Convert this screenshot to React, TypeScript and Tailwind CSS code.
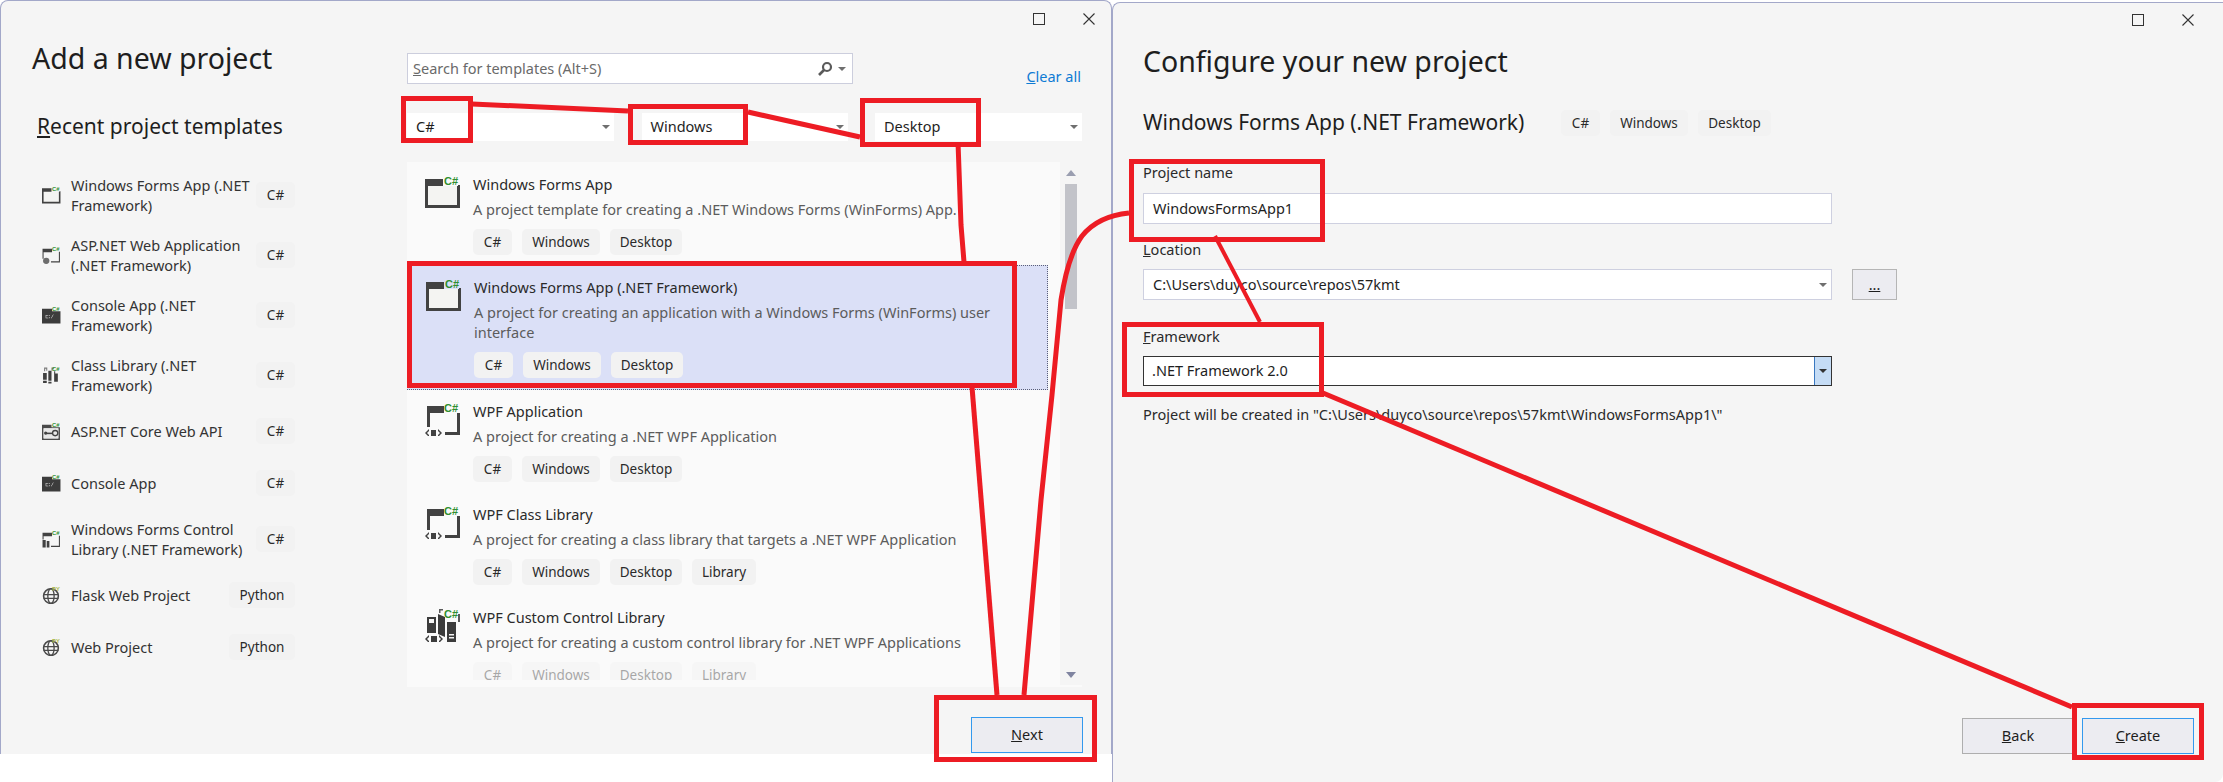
import type { ReactNode } from 'react';

const FONT = '[font-family:"Noto_Sans","Open_Sans",sans-serif]';

type Kind = 'forms' | 'asp' | 'console' | 'library' | 'api' | 'control' | 'web' | 'wpf' | 'custom';

function Mark({ label = 'C#', color = '#2f8f2f' }: { label?: string; color?: string }) {
  return (
    <text x="19" y="9.5" fontSize="11" fontWeight="700" fill={color} fontFamily="Liberation Sans, sans-serif">
      {label}
    </text>
  );
}

// project type icons, all on a 36x34 canvas
function ProjectIcon({ kind, className }: { kind: Kind; className: string }) {
  return (
    <svg viewBox="0 0 36 34" className={className} aria-hidden="true">
      {kind === 'forms' && (
        <>
          <path d="M1 5h17v6h16v21H1z" fill="#f4f4f2" />
          <path d="M0 4h18v7h15v-1h2v23H0zM3 11v19h29V11z" fill="#424242" />
        </>
      )}
      {kind === 'asp' && (
        <>
          <path d="M1 5h18v7H3v12H1z" fill="#424242" />
          <path d="M32 11h2v20H17v-2h15z" fill="#424242" />
          <circle cx="8" cy="28" r="6" fill="#6d6d6d" />
        </>
      )}
      {kind === 'console' && (
        <>
          <path d="M0 5h19v5h16v23H0z" fill="#3c3c3c" />
          <path d="M7 17h5v1H8v4h4v1H7zM14 17h1v2h-1zM14 21h1v2h-1zM17 23l4-7h1l-4 7z" fill="#e8e8e8" />
        </>
      )}
      {kind === 'library' && (
        <>
          <path d="M2 13h7v13H2zM12 9h6v19h-6zM23 10h2v4h5v16h-7zM2 28h7v4H2zM12 30h6v3h-6z" fill="#3f3f3f" />
          <path d="M4 3h6v6H8V5H6v5H4zM23 3h-5v6h2V5h3z" fill="#7a7a7a" />
        </>
      )}
      {kind === 'api' && (
        <>
          <path d="M0 5h18v5h16v24H0zM3 12v19h28V12z" fill="#4a4a4a" />
          <path d="M3 12h28v19H3z" fill="#e8e8e8" />
          <path d="M5 20h14v3H5z" fill="#424242" />
          <circle cx="7" cy="21" r="3" fill="#424242" />
          <circle cx="25" cy="21" r="5" fill="none" stroke="#424242" strokeWidth="2.5" />
        </>
      )}
      {kind === 'control' && (
        <>
          <path d="M1 5h18v7H3v6H1z" fill="#424242" />
          <path d="M32 11h2v21H17v-2h15z" fill="#424242" />
          <path d="M1 19h6v14H1zM9 21h5v12H9z" fill="#424242" />
        </>
      )}
      {kind === 'web' && (
        <>
          <circle cx="17" cy="19" r="14" fill="none" stroke="#4a4a4a" strokeWidth="3" />
          <ellipse cx="17" cy="19" rx="6" ry="14" fill="none" stroke="#4a4a4a" strokeWidth="2.5" />
          <path d="M3 15h28v2.500H3zM3 22h28v2.500H3z" fill="#4a4a4a" />
        </>
      )}
      {kind === 'wpf' && (
        <>
          <path d="M2 4h17v7H5v14H2z" fill="#424242" />
          <path d="M32 11h3v22H20v-3h12z" fill="#424242" />
          <path d="M0 31l4-4v2l-2 2 2 2v2zM17 31l-4-4v2l2 2-2 2v2zM6 28h5v6H6z" fill="#424242" />
        </>
      )}
      {kind === 'custom' && (
        <>
          <path d="M2 9h9v16H2zM13 6l7 3v20l-7-3zM22 14h9v21h-9z" fill="#3c3c3c" />
          <path d="M4 11h5v4H4zM24 26h5v1.500h-5zM24 29h5v1.500h-5z" fill="#f4f4f4" />
          <path d="M14 1h4v1.500h-2.500V5H14zM33 6h2v8h-2z" fill="#5a5a5a" />
          <path d="M0 31l4-4v2l-2 2 2 2v2zM18 31l-4-4v2l2 2-2 2v2zM6 28h6v6H6z" fill="#3c3c3c" />
        </>
      )}
      {kind === 'web' ? <Mark label="PY" color="#a9b84a" /> : <Mark />}
    </svg>
  );
}

function Tag({ children, className = '' }: { children: ReactNode; className?: string }) {
  return (
    <span className={`flex h-[26px] items-center justify-center rounded-[5px] bg-[#f2f2f2] text-[13.5px] text-[#2a2a2a] ${className}`}>
      {children}
    </span>
  );
}

function TagRow({ library }: { library?: boolean }) {
  return (
    <div className="mt-[10px] flex gap-[10px]">
      <Tag className="w-[39px]">C#</Tag>
      <Tag className="w-[78px]">Windows</Tag>
      <Tag className="w-[72px]">Desktop</Tag>
      {library && <Tag className="w-[64px]">Library</Tag>}
    </div>
  );
}

function Caret({ className = '' }: { className?: string }) {
  return <span className={`h-0 w-0 border-x-[4px] border-t-[4px] border-x-transparent border-t-[#6f6f6f] ${className}`} />;
}

const RECENT: { kind: Kind; lines: string[]; lang: string }[] = [
  { kind: 'forms', lines: ['Windows Forms App (.NET', 'Framework)'], lang: 'C#' },
  { kind: 'asp', lines: ['ASP.NET Web Application', '(.NET Framework)'], lang: 'C#' },
  { kind: 'console', lines: ['Console App (.NET', 'Framework)'], lang: 'C#' },
  { kind: 'library', lines: ['Class Library (.NET', 'Framework)'], lang: 'C#' },
  { kind: 'api', lines: ['ASP.NET Core Web API'], lang: 'C#' },
  { kind: 'console', lines: ['Console App'], lang: 'C#' },
  { kind: 'control', lines: ['Windows Forms Control', 'Library (.NET Framework)'], lang: 'C#' },
  { kind: 'web', lines: ['Flask Web Project'], lang: 'Python' },
  { kind: 'web', lines: ['Web Project'], lang: 'Python' },
];

const TEMPLATES: { kind: Kind; title: string; desc: string[]; library?: boolean; selected?: boolean }[] = [
  { kind: 'forms', title: 'Windows Forms App', desc: ['A project template for creating a .NET Windows Forms (WinForms) App.'] },
  {
    kind: 'forms',
    title: 'Windows Forms App (.NET Framework)',
    desc: ['A project for creating an application with a Windows Forms (WinForms) user', 'interface'],
    selected: true,
  },
  { kind: 'wpf', title: 'WPF Application', desc: ['A project for creating a .NET WPF Application'] },
  { kind: 'wpf', title: 'WPF Class Library', desc: ['A project for creating a class library that targets a .NET WPF Application'], library: true },
];

function RecentRow({ kind, lines, lang }: { kind: Kind; lines: string[]; lang: string }) {
  return (
    <div className={`flex items-center ${lines.length > 1 ? 'h-[60px]' : 'h-[52px]'}`}>
      <ProjectIcon kind={kind} className="h-[18px] w-[19px] shrink-0" />
      <div className="ml-[10px] flex-1 text-[14.5px] leading-[20px] text-[#333333]">
        {lines.map((l) => (
          <div key={l} className="whitespace-nowrap">{l}</div>
        ))}
      </div>
      <Tag className={lang === 'C#' ? 'w-[39px]' : 'w-[66px]'}>{lang}</Tag>
    </div>
  );
}

function TemplateItem({ kind, title, desc, library, selected }: (typeof TEMPLATES)[number]) {
  return (
    <div
      className={`flex w-[641px] pl-[18px] pt-[11px] pb-[11px] ${
        selected ? 'border border-dotted border-[#5a5f78] bg-[#dbe0f7] -mt-px pl-[17px] pt-[11px] pb-[10px]' : ''
      }`}
    >
      <ProjectIcon kind={kind} className="mt-px h-[34px] w-[36px] shrink-0" />
      <div className="ml-[12px]">
        <div className="whitespace-nowrap text-[14.5px] leading-[20px] text-[#2a2a2a]">{title}</div>
        <div className="mt-[5px] text-[14.5px] leading-[20px] text-[#5c5c5c]">
          {desc.map((l) => (
            <div key={l} className="whitespace-nowrap">{l}</div>
          ))}
        </div>
        <TagRow library={library} />
      </div>
    </div>
  );
}

function AddProjectWindow() {
  return (
    <div className="flex h-[754px] w-[1112px] shrink-0 rounded-t-[8px] border-x border-t border-[#a3a8c9] bg-[#f5f5f5]">
      <div className="w-[406px] shrink-0">
        <h1 className="pl-[31px] pt-[37px] text-[28.5px] font-normal leading-[40px] text-[#1e1e1e]">Add a new project</h1>
        <h2 className="pl-[36px] pt-[33px] text-[21px] font-normal leading-[30px] text-[#1e1e1e]">
          <u>R</u>ecent project templates
        </h2>
        <div className="ml-[41px] mr-[112px] mt-[24px]">
          {RECENT.map((r, i) => (
            <RecentRow key={i} {...r} />
          ))}
        </div>
      </div>

      <div className="flex w-[704px] flex-col pr-[29px]">
        <div className="-mr-[13px] flex h-[52px] justify-end gap-[38px] pt-[12px]">
          <span className="h-[12px] w-[12px] border-[1.5px] border-[#333333]" />
          <svg viewBox="0 0 12 12" className="h-[12px] w-[12px]" aria-hidden="true">
            <path d="M0.500 0.500l11 11M11.500 0.500l-11 11" stroke="#333333" strokeWidth="1.100" />
          </svg>
        </div>

        <div className="flex justify-between">
          <div className="flex h-[31px] w-[446px] items-center border border-[#ccceDD] bg-white pl-[5px] pr-[5px] text-[14.5px] text-[#6a6a6a]">
            <span className="flex-1"><u>S</u>earch for templates (Alt+S)</span>
            <svg viewBox="0 0 16 16" className="h-[16px] w-[16px]" aria-hidden="true">
              <circle cx="10" cy="6" r="4" fill="none" stroke="#5a5a5a" strokeWidth="2.200" />
              <path d="M7 9l-5 5" stroke="#5a5a5a" strokeWidth="2.600" />
            </svg>
            <Caret className="ml-[5px] mr-[1px]" />
          </div>
          <span className="mr-px mt-[13px] text-[14.5px] leading-[20px] text-[#0e7bd4]">
            <u>C</u>lear all
          </span>
        </div>

        <div className="mt-[27px] flex justify-between">
          {[
            ['C#', 'w-[207px]'],
            ['Windows', 'w-[206px]'],
            ['Desktop', 'w-[207px]'],
          ].map(([label, width]) => (
            <div key={label} className={`flex h-[28px] items-center justify-between bg-white pl-[9px] pr-[4px] text-[14.5px] text-[#1e1e1e] ${width}`}>
              {label}
              <Caret />
            </div>
          ))}
        </div>

        <div className="mt-[21px] flex h-[525px] overflow-hidden bg-[#fafafa]">
          <div className="flex-1 overflow-hidden pt-px">
            {TEMPLATES.map((t) => (
              <TemplateItem key={t.title} {...t} />
            ))}
            <div className="flex w-[641px] pl-[18px] pt-[11px]">
              <ProjectIcon kind="custom" className="mt-px h-[34px] w-[36px] shrink-0" />
              <div className="ml-[12px]">
                <div className="text-[14.5px] leading-[20px] text-[#2a2a2a]">WPF Custom Control Library</div>
                <div className="mt-[5px] whitespace-nowrap text-[14.5px] leading-[20px] text-[#5c5c5c]">
                  A project for creating a custom control library for .NET WPF Applications
                </div>
                <div className="h-[28px] overflow-hidden opacity-40">
                  <TagRow library />
                </div>
              </div>
            </div>
          </div>
          <div className="flex h-[523px] w-[22px] shrink-0 flex-col items-center bg-[#f5f5f5] pt-[8px]">
            <span className="h-0 w-0 border-x-[5px] border-b-[6px] border-x-transparent border-b-[#9a9eb0]" />
            <span className="mt-[8px] h-[125px] w-[12px] bg-[#c2c3c9]" />
            <span className="mt-auto mb-[7px] h-0 w-0 border-x-[5px] border-t-[6px] border-x-transparent border-t-[#7f84a0]" />
          </div>
        </div>

        <div className="mt-[30px] flex justify-end">
          <button className="-mr-px h-[36px] w-[112px] border border-[#3399ee] bg-[#ececf1] text-[14.5px] text-[#1e1e1e]">
            <u>N</u>ext
          </button>
        </div>
      </div>
    </div>
  );
}

function Field({ label, children }: { label: ReactNode; children: ReactNode }) {
  return (
    <div>
      <div className="text-[14.5px] leading-[20px] text-[#2a2a2a]">{label}</div>
      {children}
    </div>
  );
}

function ConfigureWindow() {
  return (
    <div className="mt-[2px] flex h-[780px] flex-1 flex-col rounded-tl-[8px] rounded-br-[8px] border-l border-t border-[#a3a8c9] bg-[#f5f5f5] pl-[30px]">
      <div className="-mb-[12px] flex justify-end gap-[38px] pr-[29px] pt-[11px]">
        <span className="h-[12px] w-[12px] border-[1.5px] border-[#333333]" />
        <svg viewBox="0 0 12 12" className="h-[12px] w-[12px]" aria-hidden="true">
          <path d="M0.500 0.500l11 11M11.500 0.500l-11 11" stroke="#333333" strokeWidth="1.100" />
        </svg>
      </div>
      <h1 className="pt-[27px] text-[28.5px] font-normal leading-[40px] text-[#1e1e1e]">Configure your new project</h1>
      <div className="mt-[29px] flex h-[26px] items-center">
        <h2 className="w-[418px] whitespace-nowrap text-[21px] font-normal text-[#1e1e1e]">Windows Forms App (.NET Framework)</h2>
        <div className="flex gap-[10px]">
          <Tag className="w-[39px]">C#</Tag>
          <Tag className="w-[78px]">Windows</Tag>
          <Tag className="w-[73px]">Desktop</Tag>
        </div>
      </div>

      <div className="mt-[26px]">
        <Field label="Project name">
          <div className="mt-[11px] flex h-[31px] w-[689px] items-center border border-[#ced0e0] bg-white pl-[9px] text-[14.5px] text-[#1e1e1e]">
            WindowsFormsApp1
          </div>
        </Field>
      </div>
      <div className="mt-[15px] flex items-end gap-[20px]">
        <Field label={<><u>L</u>ocation</>}>
          <div className="mt-[10px] flex h-[31px] w-[689px] items-center justify-between border border-[#ced0e0] bg-white pl-[9px] pr-[4px] text-[14.5px] text-[#1e1e1e]">
            C:\Users\duyco\source\repos\57kmt
            <Caret />
          </div>
        </Field>
        <div className="flex h-[31px] w-[45px] items-center justify-center border border-[#b5b5b5] bg-[#ececf1] text-[14.5px] text-[#1e1e1e]">
          <u>...</u>
        </div>
      </div>
      <div className="mt-[26px]">
        <Field label={<><u>F</u>ramework</>}>
          <div className="mt-[10px] flex h-[30px] w-[689px] items-center justify-between border border-[#333333] bg-white pl-[8px] text-[14.5px] text-[#1e1e1e]">
            .NET Framework 2.0
            <span className="flex h-full w-[17px] items-center justify-center border-l border-[#3a78c0] bg-[#c5dcf5]">
              <Caret className="border-t-[#333333]" />
            </span>
          </div>
        </Field>
      </div>
      <p className="mt-[18px] text-[14.5px] leading-[20px] text-[#2a2a2a]">
        Project will be created in "C:\Users\duyco\source\repos\57kmt\WindowsFormsApp1\"
      </p>

      <div className="mt-auto mb-[28px] flex justify-end gap-[8px] pr-[29px]">
        <button className="h-[36px] w-[112px] border border-[#aeaeae] bg-[#ececf1] text-[14.5px] text-[#1e1e1e]">
          <u>B</u>ack
        </button>
        <button className="h-[36px] w-[112px] border border-[#3399ee] bg-[#ececf1] text-[14.5px] text-[#1e1e1e]">
          <u>C</u>reate
        </button>
      </div>
    </div>
  );
}

// the red hand-drawn annotations lying over both windows
function Annotations() {
  const boxes = [
    [403.5, 98.5, 67, 42],
    [630.5, 106.5, 115, 36],
    [862.5, 100.5, 116, 44],
    [409.5, 263.5, 605, 122],
    [936.5, 697.5, 158, 62],
    [1131.5, 161.5, 191, 78],
    [1124.5, 324.500, 197, 70],
    [2074.5, 705.5, 127, 52],
  ];
  return (
    <svg viewBox="0 0 2223 782" className="pointer-events-none absolute inset-0 h-[782px] w-[2223px]" aria-hidden="true">
      <g fill="none" stroke="#ed1c24">
        {boxes.map(([x, y, w, h]) => (
          <rect key={`${x}-${y}`} x={x} y={y} width={w} height={h} strokeWidth="5" />
        ))}
        <path d="M472 104L628 111" strokeWidth="5" />
        <path d="M748 112L860 137" strokeWidth="5" />
        <path d="M958 142L961 225L964 262" strokeWidth="5" />
        <path d="M972 387L997 695" strokeWidth="5" />
        <path d="M1024 695L1041 500L1052 395L1061 300Q1068 255 1082 236Q1098 216 1129 213" strokeWidth="5" />
        <path d="M1215 236L1260 322" strokeWidth="4" />
        <path d="M1323 393L2072 707" strokeWidth="5" />
      </g>
    </svg>
  );
}

export default function App() {
  return (
    <div className={`relative flex h-[782px] w-[2223px] overflow-hidden bg-white ${FONT}`}>
      <AddProjectWindow />
      <ConfigureWindow />
      <Annotations />
    </div>
  );
}
